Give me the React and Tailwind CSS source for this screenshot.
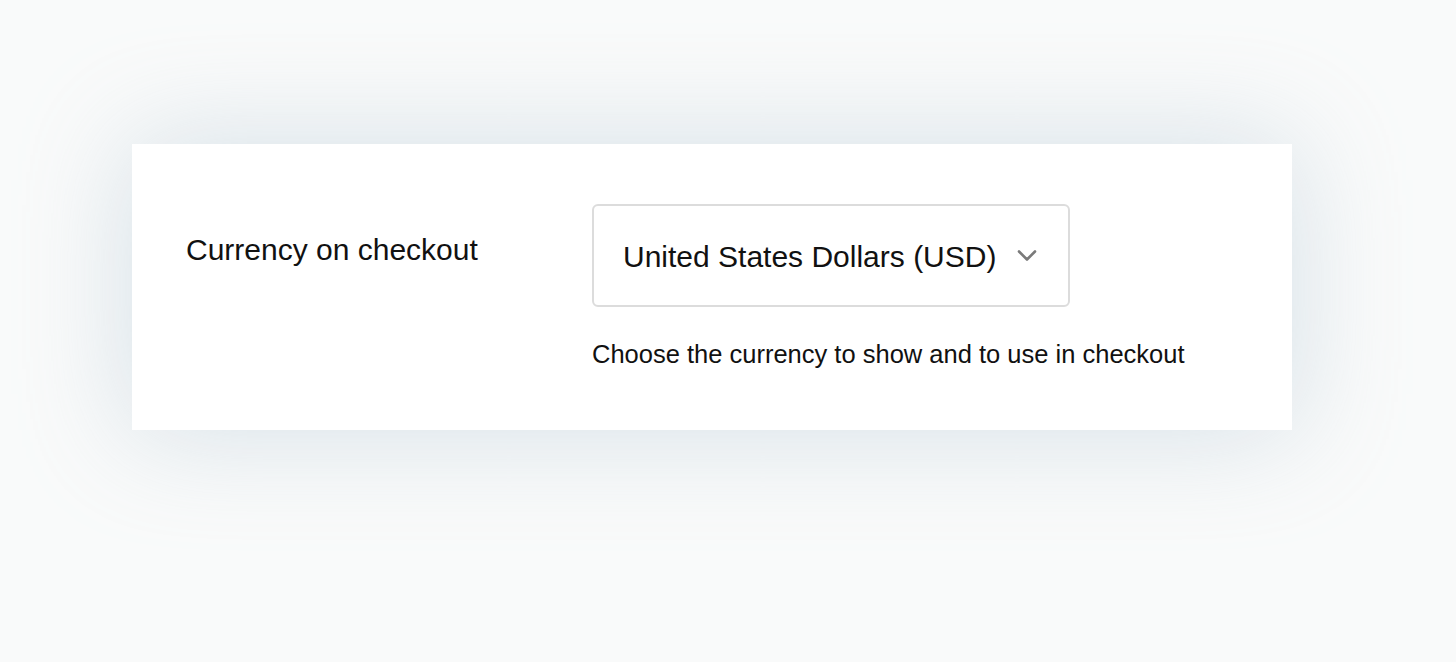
import React from 'react';

const ChevronDown = () => (
  <svg width="20" height="13" viewBox="0 0 20 13" fill="none">
    <path d="M2 2.5 L10 10.5 L18 2.5" stroke="#7a7a7a" strokeWidth="2.6" strokeLinecap="round" strokeLinejoin="round" />
  </svg>
);

const App = () => {
  return (
    <div
      className="w-[1456px] h-[662px] bg-[#f9fafa] pt-[144px] pl-[132px]"
      style={{ fontFamily: '"Liberation Sans", Arial, sans-serif' }}
    >
      <div className="w-[1160px] h-[286px] bg-white shadow-[0_0_110px_rgba(170,192,208,0.45)] pt-[60px] pl-[54px] flex text-[#111]">
        {/* label */}
        <div className="w-[406px] pt-[29px] text-[30px] leading-[34px]">Currency on checkout</div>

        {/* select + help */}
        <div className="flex flex-col">
          <div className="w-[478px] h-[103px] border-2 border-[#dcdcdc] rounded-[6px] flex items-center justify-between pl-[29px] pr-[31px]">
            <span className="text-[30px] leading-[34px] pt-[2px]">United States Dollars (USD)</span>
            <ChevronDown />
          </div>
          <div className="mt-[32px] text-[25.5px] leading-[30px]">
            Choose the currency to show and to use in checkout
          </div>
        </div>
      </div>
    </div>
  );
};

export default App;
